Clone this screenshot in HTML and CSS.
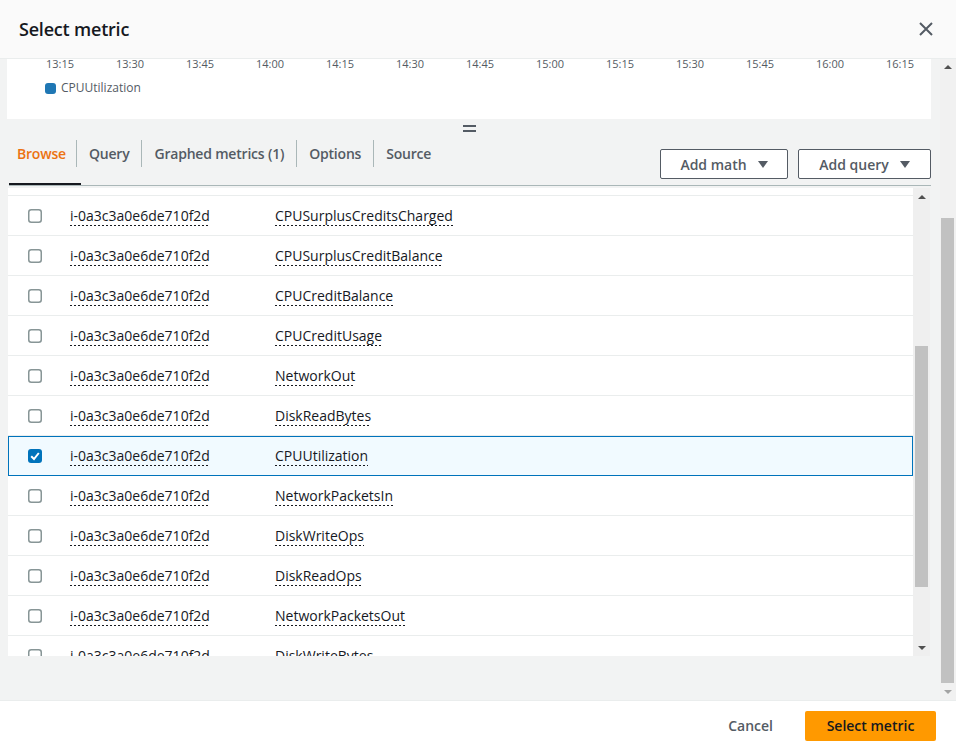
FILE: index.html
```html
<!DOCTYPE html>
<html lang="en">
<head>
<meta charset="utf-8">
<title>Select metric</title>
<link rel="stylesheet" href="styles.css">
</head>
<body>
<div class="modal">
  <header class="modal-header">
    <h1 class="title">Select metric</h1>
    <button class="close" aria-label="Close">
      <svg width="14" height="14" viewBox="0 0 14 14"><path d="M1 1L13 13M13 1L1 13" stroke="#545b64" stroke-width="2" fill="none"/></svg>
    </button>
  </header>

  <div class="modal-body">
    <div class="body-content">
      <div class="chart">
        <div class="axis">
          <span>13:15</span><span>13:30</span><span>13:45</span><span>14:00</span><span>14:15</span><span>14:30</span><span>14:45</span><span>15:00</span><span>15:15</span><span>15:30</span><span>15:45</span><span>16:00</span><span>16:15</span>
        </div>
        <div class="legend"><span class="swatch"></span><span>CPUUtilization</span></div>
      </div>

      <div class="handle"><span></span><span></span></div>

      <div class="toolbar">
        <nav class="tabs">
          <a class="tab active"><span class="tab-label">Browse</span></a>
          <a class="tab"><span class="tab-label sep">Query</span></a>
          <a class="tab"><span class="tab-label sep">Graphed metrics (1)</span></a>
          <a class="tab"><span class="tab-label sep">Options</span></a>
          <a class="tab"><span class="tab-label sep">Source</span></a>
        </nav>
        <div class="actions">
          <button class="btn btn-math">Add math <svg class="caret" width="10" height="7" viewBox="0 0 10 7"><path d="M0 0H10L5 7Z" fill="#545b64"/></svg></button>
          <button class="btn btn-query">Add query <svg class="caret" width="10" height="7" viewBox="0 0 10 7"><path d="M0 0H10L5 7Z" fill="#545b64"/></svg></button>
        </div>
      </div>

      <div class="list">
        <div class="rows">
          <div class="row-edge"></div>
          <div class="row"><svg class="cb" width="14" height="14" viewBox="0 0 14 14"><rect x="0.75" y="0.75" width="12.5" height="12.5" rx="2.5" fill="#fff" stroke="#879596" stroke-width="1.5"/></svg><span class="cell-id"><span class="link">i-0a3c3a0e6de710f2d</span></span><span class="cell-name"><span class="link">CPUSurplusCreditsCharged</span></span></div>
          <div class="row"><svg class="cb" width="14" height="14" viewBox="0 0 14 14"><rect x="0.75" y="0.75" width="12.5" height="12.5" rx="2.5" fill="#fff" stroke="#879596" stroke-width="1.5"/></svg><span class="cell-id"><span class="link">i-0a3c3a0e6de710f2d</span></span><span class="cell-name"><span class="link">CPUSurplusCreditBalance</span></span></div>
          <div class="row"><svg class="cb" width="14" height="14" viewBox="0 0 14 14"><rect x="0.75" y="0.75" width="12.5" height="12.5" rx="2.5" fill="#fff" stroke="#879596" stroke-width="1.5"/></svg><span class="cell-id"><span class="link">i-0a3c3a0e6de710f2d</span></span><span class="cell-name"><span class="link">CPUCreditBalance</span></span></div>
          <div class="row"><svg class="cb" width="14" height="14" viewBox="0 0 14 14"><rect x="0.75" y="0.75" width="12.5" height="12.5" rx="2.5" fill="#fff" stroke="#879596" stroke-width="1.5"/></svg><span class="cell-id"><span class="link">i-0a3c3a0e6de710f2d</span></span><span class="cell-name"><span class="link">CPUCreditUsage</span></span></div>
          <div class="row"><svg class="cb" width="14" height="14" viewBox="0 0 14 14"><rect x="0.75" y="0.75" width="12.5" height="12.5" rx="2.5" fill="#fff" stroke="#879596" stroke-width="1.5"/></svg><span class="cell-id"><span class="link">i-0a3c3a0e6de710f2d</span></span><span class="cell-name"><span class="link">NetworkOut</span></span></div>
          <div class="row"><svg class="cb" width="14" height="14" viewBox="0 0 14 14"><rect x="0.75" y="0.75" width="12.5" height="12.5" rx="2.5" fill="#fff" stroke="#879596" stroke-width="1.5"/></svg><span class="cell-id"><span class="link">i-0a3c3a0e6de710f2d</span></span><span class="cell-name"><span class="link">DiskReadBytes</span></span></div>
          <div class="row selected"><svg class="cb" width="14" height="14" viewBox="0 0 14 14"><rect x="0" y="0" width="14" height="14" rx="3" fill="#0073bb"/><path d="M3.2 7.2L6 10L10.8 4" stroke="#fff" stroke-width="2" fill="none"/></svg><span class="cell-id"><span class="link">i-0a3c3a0e6de710f2d</span></span><span class="cell-name"><span class="link">CPUUtilization</span></span></div>
          <div class="row"><svg class="cb" width="14" height="14" viewBox="0 0 14 14"><rect x="0.75" y="0.75" width="12.5" height="12.5" rx="2.5" fill="#fff" stroke="#879596" stroke-width="1.5"/></svg><span class="cell-id"><span class="link">i-0a3c3a0e6de710f2d</span></span><span class="cell-name"><span class="link">NetworkPacketsIn</span></span></div>
          <div class="row"><svg class="cb" width="14" height="14" viewBox="0 0 14 14"><rect x="0.75" y="0.75" width="12.5" height="12.5" rx="2.5" fill="#fff" stroke="#879596" stroke-width="1.5"/></svg><span class="cell-id"><span class="link">i-0a3c3a0e6de710f2d</span></span><span class="cell-name"><span class="link">DiskWriteOps</span></span></div>
          <div class="row"><svg class="cb" width="14" height="14" viewBox="0 0 14 14"><rect x="0.75" y="0.75" width="12.5" height="12.5" rx="2.5" fill="#fff" stroke="#879596" stroke-width="1.5"/></svg><span class="cell-id"><span class="link">i-0a3c3a0e6de710f2d</span></span><span class="cell-name"><span class="link">DiskReadOps</span></span></div>
          <div class="row"><svg class="cb" width="14" height="14" viewBox="0 0 14 14"><rect x="0.75" y="0.75" width="12.5" height="12.5" rx="2.5" fill="#fff" stroke="#879596" stroke-width="1.5"/></svg><span class="cell-id"><span class="link">i-0a3c3a0e6de710f2d</span></span><span class="cell-name"><span class="link">NetworkPacketsOut</span></span></div>
          <div class="row"><svg class="cb" width="14" height="14" viewBox="0 0 14 14"><rect x="0.75" y="0.75" width="12.5" height="12.5" rx="2.5" fill="#fff" stroke="#879596" stroke-width="1.5"/></svg><span class="cell-id"><span class="link">i-0a3c3a0e6de710f2d</span></span><span class="cell-name"><span class="link">DiskWriteBytes</span></span></div>
        </div>
        <div class="scrollbar inner-scroll">
          <div class="sb-btn"><svg width="8" height="4" viewBox="0 0 8 4"><path d="M0 4L4 0L8 4Z" fill="#505050"/></svg></div>
          <div class="sb-track"><div class="sb-thumb inner-thumb"></div></div>
          <div class="sb-btn"><svg width="8" height="4" viewBox="0 0 8 4"><path d="M0 0L8 0L4 4Z" fill="#505050"/></svg></div>
        </div>
      </div>
    </div>

    <div class="scrollbar outer-scroll">
      <div class="sb-btn outer-btn"><svg width="8" height="4" viewBox="0 0 8 4"><path d="M0 4L4 0L8 4Z" fill="#505050"/></svg></div>
      <div class="sb-track"><div class="sb-thumb outer-thumb"></div></div>
      <div class="sb-btn outer-btn"><svg width="8" height="4" viewBox="0 0 8 4"><path d="M0 0L8 0L4 4Z" fill="#a3a3a3"/></svg></div>
    </div>
  </div>

  <footer class="modal-footer">
    <button class="btn-link">Cancel</button>
    <button class="btn-primary">Select metric</button>
  </footer>
</div>
</body>
</html>
```

FILE: styles.css
```css
* {
  box-sizing: border-box;
}

html, body {
  margin: 0;
  padding: 0;
  background: #ffffff;
}

body {
  font-family: "Open Sans", "Noto Sans", sans-serif;
  color: #16191f;
  width: 956px;
  height: 750px;
  overflow: hidden;
}

.modal {
  display: flex;
  flex-direction: column;
  width: 956px;
  height: 750px;
}

/* Header */
.modal-header {
  flex: none;
  height: 59px;
  background: #fafafa;
  border-bottom: 1px solid #eaeded;
  display: flex;
  align-items: center;
  justify-content: space-between;
  padding: 0 23px 0 19px;
}

.title {
  margin: 0;
  font-size: 18px;
  font-weight: 600;
  letter-spacing: -0.2px;
  line-height: 22px;
  color: #16191f;
  white-space: nowrap;
}

.close {
  border: 0;
  background: transparent;
  padding: 0;
  width: 14px;
  height: 14px;
  display: flex;
}

/* Body */
.modal-body {
  flex: none;
  height: 641px;
  display: flex;
  background: #f2f3f3;
}

.body-content {
  width: 940px;
  display: flex;
  flex-direction: column;
  padding: 0 9px 0 7px;
}

.chart {
  flex: none;
  height: 60px;
  background: #ffffff;
}

.axis {
  display: flex;
  padding-left: 18px;
  margin-top: -1px;
  font-size: 11px;
  line-height: 12px;
  color: #545b64;
}

.axis span {
  width: 70px;
  text-align: center;
  flex: none;
}

.legend {
  display: flex;
  align-items: center;
  margin-top: 11px;
  padding-left: 38px;
  font-size: 12px;
  line-height: 14px;
  color: #545b64;
}

.swatch {
  width: 11px;
  height: 11px;
  border-radius: 3px;
  background: #1f77b4;
  margin-right: 5px;
}

.handle {
  flex: none;
  height: 18px;
  display: flex;
  flex-direction: column;
  align-items: center;
  padding-top: 6px;
  gap: 3px;
}

.handle span {
  width: 13px;
  height: 2px;
  background: #545b64;
}

/* Toolbar with tabs */
.toolbar {
  flex: none;
  height: 49px;
  margin-left: 2px;
  display: flex;
  justify-content: space-between;
  border-bottom: 1px solid #aab7b8;
}

.tabs {
  display: flex;
}

.tab {
  position: relative;
  padding-top: 3px;
  font-size: 14px;
  font-weight: 600;
  letter-spacing: -0.2px;
  color: #545b64;
  white-space: nowrap;
}

.tab-label {
  display: block;
  line-height: 27px;
  padding: 0 12px;
}

.tab:first-child .tab-label {
  padding-left: 8px;
  padding-right: 10px;
}

.tab-label.sep {
  border-left: 1px solid #aab7b8;
}

.tab.active {
  color: #ec7211;
}

.tab.active::after {
  content: "";
  position: absolute;
  left: 0;
  right: -5px;
  bottom: 0;
  height: 2px;
  background: #16191f;
}

.actions {
  display: flex;
  gap: 10px;
  padding-top: 12px;
}

.btn {
  height: 30px;
  border: 1px solid #545b64;
  border-radius: 2px;
  background: #ffffff;
  color: #545b64;
  font-family: inherit;
  font-size: 14px;
  font-weight: 600;
  white-space: nowrap;
  display: flex;
  align-items: center;
  justify-content: center;
  gap: 11px;
  padding: 0 10px;
}

.btn-math {
  width: 128px;
}

.btn-query {
  width: 133px;
}

/* List */
.list {
  flex: none;
  height: 468px;
  margin: 2px 1px 0 1px;
  display: flex;
  background: #ffffff;
  overflow: hidden;
}

.rows {
  width: 905px;
  overflow: hidden;
}

.row-edge {
  height: 8px;
  border-bottom: 1px solid #eaeded;
}

.row {
  display: flex;
  align-items: center;
  height: 40px;
  padding-left: 20px;
  border-bottom: 1px solid #eaeded;
  font-size: 14px;
  color: #16191f;
  white-space: nowrap;
}

.row.selected {
  background: #f1faff;
  border: 1px solid #0073bb;
  padding-left: 19px;
  padding-bottom: 1px;
}

.cb {
  flex: none;
  width: 14px;
  height: 14px;
  margin-right: 28px;
}

.cell-id {
  width: 205px;
  flex: none;
}

.link {
  line-height: 17px;
  padding-bottom: 1px;
  background-image: linear-gradient(to right, #16191f 50%, transparent 50%);
  background-size: 4px 1px;
  background-repeat: repeat-x;
  background-position: 0 100%;
}

/* Scrollbars */
.scrollbar {
  display: flex;
  flex-direction: column;
  background: #efefef;
}

.inner-scroll {
  width: 17px;
}

.sb-btn {
  flex: none;
  height: 17px;
  display: flex;
  align-items: center;
  justify-content: center;
}

.sb-track {
  flex: 1;
}

.sb-thumb {
  background: #c1c1c1;
}

.inner-thumb {
  margin: 141px 2px 0 2px;
  height: 241px;
}

.outer-scroll {
  width: 16px;
  background: #f1f1f1;
}

.outer-btn {
  height: 16px;
}

.outer-thumb {
  margin: 143px 2px 0 1px;
  height: 465px;
}

/* Footer */
.modal-footer {
  flex: none;
  height: 50px;
  border-top: 1px solid #eaeded;
  display: flex;
  align-items: center;
  justify-content: flex-end;
  padding: 0 20px 0 0;
  gap: 12px;
}

.btn-link {
  border: 0;
  background: transparent;
  font-family: inherit;
  font-size: 14px;
  font-weight: 600;
  color: #545b64;
  padding: 4px 20px;
  white-space: nowrap;
}

.btn-primary {
  height: 30px;
  border: 0;
  border-radius: 2px;
  background: #ff9900;
  color: #16191f;
  font-family: inherit;
  font-size: 14px;
  font-weight: 600;
  white-space: nowrap;
  padding: 0 20px;
  width: 131px;
}
```
